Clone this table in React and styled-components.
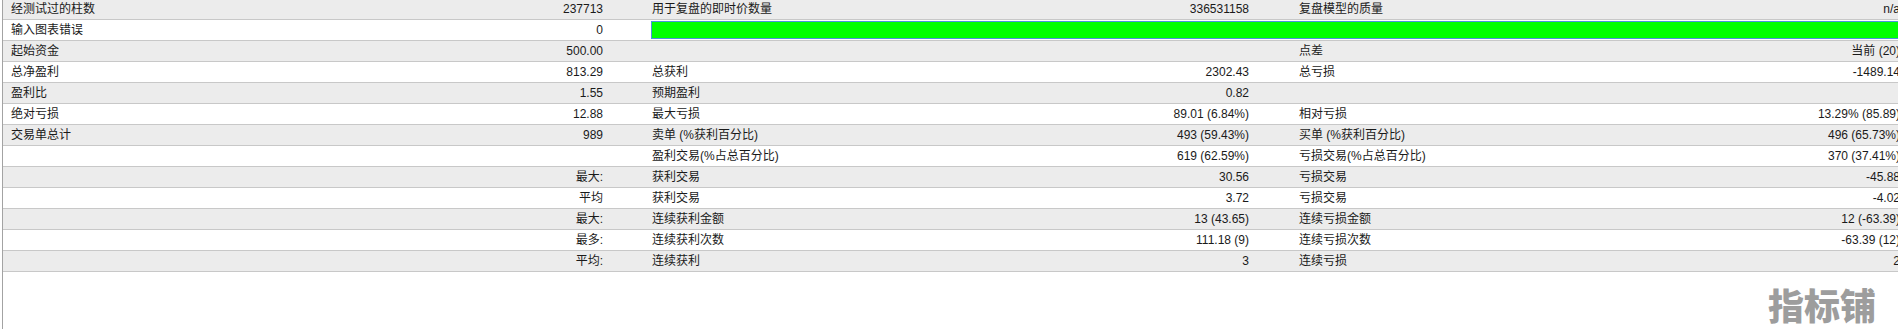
import styled, { createGlobalStyle } from "styled-components";

const Global = createGlobalStyle`
  html, body {
    margin: 0;
    padding: 0;
    background: #fff;
    overflow: hidden;
  }
  body {
    width: 1898px;
    height: 329px;
    font-family: "Liberation Sans", "Noto Sans CJK SC", sans-serif;
    font-size: 12px;
    color: #1a1a1a;
  }
`;

const Page = styled.div`
  position: relative;
  width: 1898px;
  height: 329px;
  overflow: hidden;
`;

const Sheet = styled.div`
  margin-left: 2px;
  height: 329px;
  border-left: 1px solid #a3a3a3;
  display: flex;
  flex-direction: column;
`;

const Table = styled.div`
  margin-top: -1px;
  display: flex;
  flex-direction: column;
`;

const Row = styled.div`
  display: grid;
  grid-template-columns: 300px 305px 341px 305px 345px 306px;
  width: 1902px;
  height: 20px;
  align-items: center;
  background: ${(p) => (p.$shade ? "#ececec" : "#ffffff")};
  border-bottom: 1px solid #c8c8c8;
`;

const Label = styled.div`
  padding-left: ${(p) => p.$indent || 8}px;
  white-space: nowrap;
  overflow: hidden;
  line-height: 20px;
`;

const Value = styled.div`
  padding-right: 5px;
  text-align: right;
  white-space: nowrap;
  line-height: 20px;
`;

const Bar = styled.div`
  grid-column: 3 / 7;
  margin-left: 43px;
  height: 16px;
  background: #00ff00;
  border: 1px solid #4a93dd;
`;

const Watermark = styled.div`
  position: absolute;
  left: 1768px;
  top: 286px;
  font-family: "Noto Sans CJK SC", sans-serif;
  font-size: 36px;
  font-weight: 900;
  line-height: 36px;
  color: #9d9d9d;
  white-space: nowrap;
`;

const rows = [
  ["经测试过的柱数", "237713", "用于复盘的即时价数量", "336531158", "复盘模型的质量", "n/a"],
  ["输入图表错误", "0", null],
  ["起始资金", "500.00", "", "", "点差", "当前 (20)"],
  ["总净盈利", "813.29", "总获利", "2302.43", "总亏损", "-1489.14"],
  ["盈利比", "1.55", "预期盈利", "0.82", "", ""],
  ["绝对亏损", "12.88", "最大亏损", "89.01 (6.84%)", "相对亏损", "13.29% (85.89)"],
  ["交易单总计", "989", "卖单 (%获利百分比)", "493 (59.43%)", "买单 (%获利百分比)", "496 (65.73%)"],
  ["", "", "盈利交易(%占总百分比)", "619 (62.59%)", "亏损交易(%占总百分比)", "370 (37.41%)"],
  ["", "最大:", "获利交易", "30.56", "亏损交易", "-45.88"],
  ["", "平均", "获利交易", "3.72", "亏损交易", "-4.02"],
  ["", "最大:", "连续获利金额", "13 (43.65)", "连续亏损金额", "12 (-63.39)"],
  ["", "最多:", "连续获利次数", "111.18 (9)", "连续亏损次数", "-63.39 (12)"],
  ["", "平均:", "连续获利", "3", "连续亏损", "2"],
];

function App() {
  return (
    <Page>
      <Global />
      <Sheet>
        <Table>
          {rows.map((r, i) => (
            <Row key={i} $shade={i % 2 === 0}>
              <Label>{r[0]}</Label>
              <Value>{r[1]}</Value>
              {r[2] === null ? (
                <Bar />
              ) : (
                <>
                  <Label $indent={44}>{r[2]}</Label>
                  <Value>{r[3]}</Value>
                  <Label $indent={45}>{r[4]}</Label>
                  <Value>{r[5]}</Value>
                </>
              )}
            </Row>
          ))}
        </Table>
      </Sheet>
      <Watermark>指标铺</Watermark>
    </Page>
  );
}

export default App;
